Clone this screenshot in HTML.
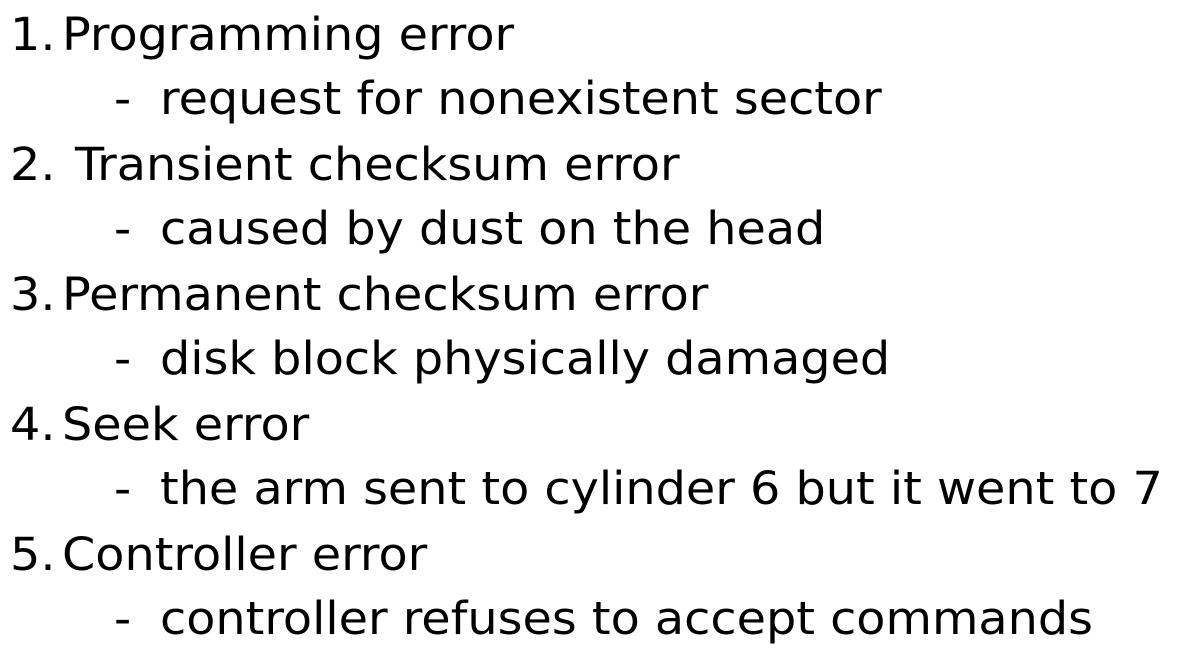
<!DOCTYPE html>
<html><head><meta charset="utf-8"><style>
html,body{margin:0;padding:0;background:#fff;}
body{width:1180px;height:650px;position:relative;overflow:hidden;font-family:"DejaVu Sans","Liberation Sans",sans-serif;font-size:45px;color:#000;}
.l{position:absolute;white-space:nowrap;line-height:1;transform:scaleX(1.06);transform-origin:0 0;}
</style></head><body>
<div class="l" style="left:10px;top:12px">1.</div><div class="l" style="left:62px;top:12px">Programming error</div>
<div class="l" style="left:114px;top:76px">-</div><div class="l" style="left:160px;top:76px">request for nonexistent sector</div>
<div class="l" style="left:10px;top:142px">2.</div><div class="l" style="left:75px;top:142px">Transient checksum error</div>
<div class="l" style="left:114px;top:206px">-</div><div class="l" style="left:160px;top:206px">caused by dust on the head</div>
<div class="l" style="left:10px;top:272px">3.</div><div class="l" style="left:62px;top:272px">Permanent checksum error</div>
<div class="l" style="left:114px;top:336px">-</div><div class="l" style="left:160px;top:336px">disk block physically damaged</div>
<div class="l" style="left:10px;top:402px">4.</div><div class="l" style="left:62px;top:402px">Seek error</div>
<div class="l" style="left:114px;top:466px">-</div><div class="l" style="left:160px;top:466px">the arm sent to cylinder 6 but it went to 7</div>
<div class="l" style="left:10px;top:532px">5.</div><div class="l" style="left:62px;top:532px">Controller error</div>
<div class="l" style="left:114px;top:596px">-</div><div class="l" style="left:160px;top:596px">controller refuses to accept commands</div>
</body></html>
